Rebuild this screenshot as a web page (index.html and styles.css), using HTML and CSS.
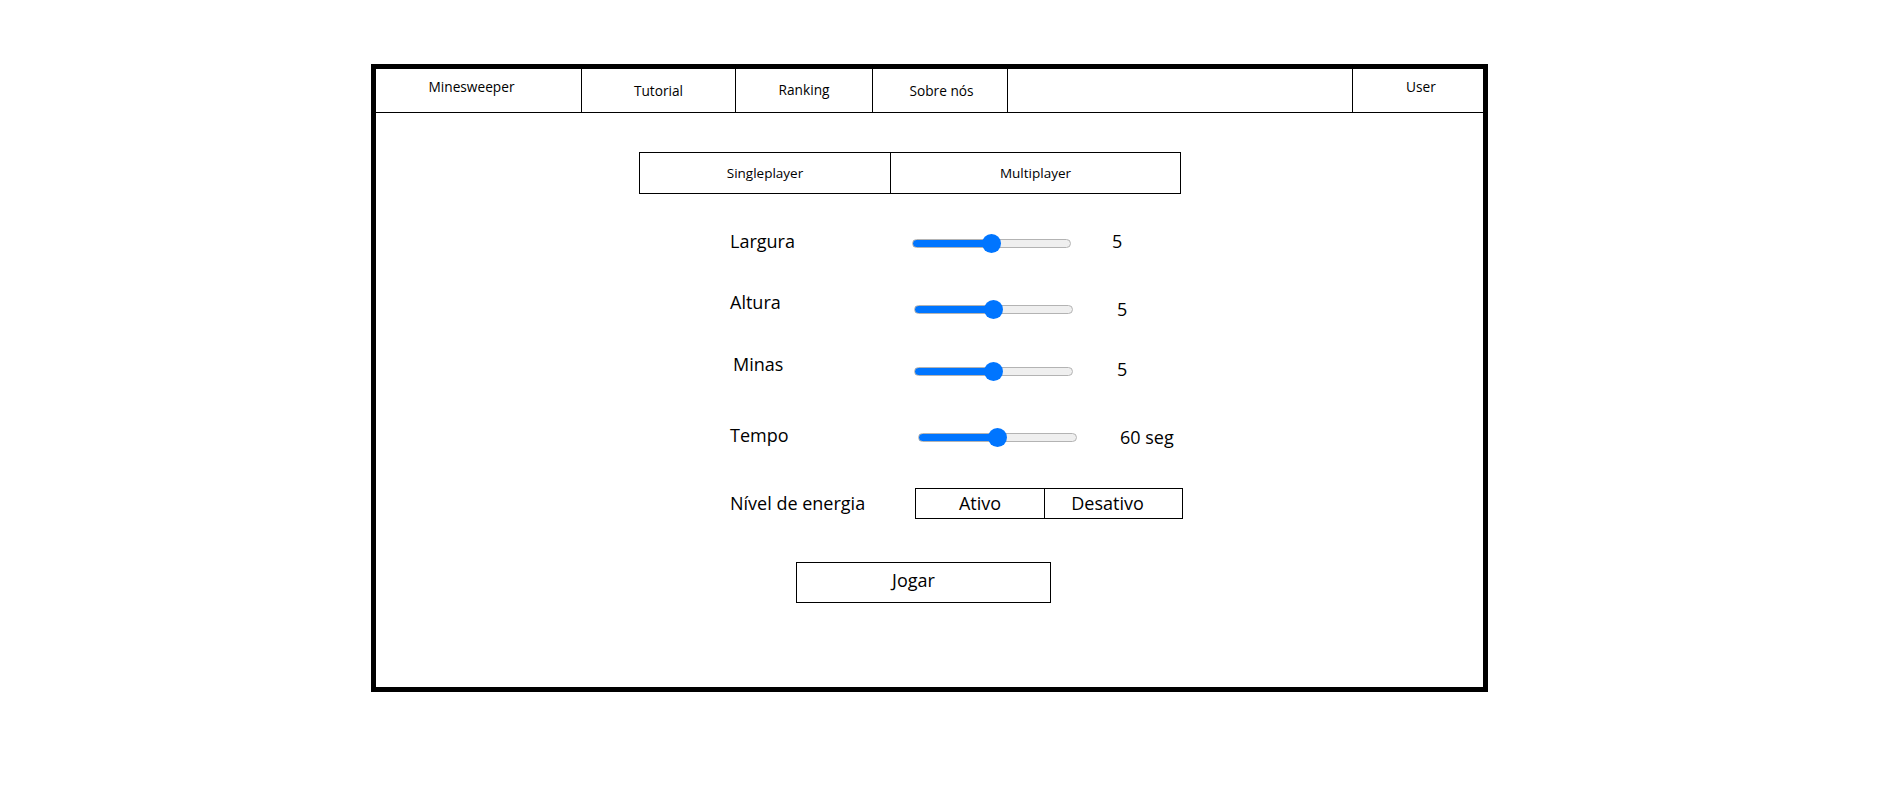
FILE: index.html
```html
<!DOCTYPE html>
<html lang="pt">
<head>
<meta charset="utf-8">
<title>Minesweeper</title>
<link rel="stylesheet" href="styles.css">
</head>
<body>
<div class="page">
  <div class="frame">
    <nav class="nav">
      <a class="nav-item nav-brand raised">Minesweeper</a>
      <a class="nav-item nav-tutorial raised-xs">Tutorial</a>
      <a class="nav-item nav-ranking raised-sm">Ranking</a>
      <a class="nav-item nav-about raised-xs">Sobre nós</a>
      <div class="nav-item nav-spacer"></div>
      <a class="nav-item nav-user raised">User</a>
    </nav>
    <main class="content">
      <div class="mode-toggle">
        <button class="mode mode-single" type="button">Singleplayer</button>
        <button class="mode mode-multi" type="button">Multiplayer</button>
      </div>
      <form class="settings">
        <div class="row">
          <label class="label lift-sm" for="largura">Largura</label>
          <input class="slider slider-left" id="largura" type="range" min="0" max="10" value="5" style="--fill: 50%">
          <span class="value value-near lift-sm">5</span>
        </div>
        <div class="row row-gap-l">
          <label class="label lift-lg" for="altura">Altura</label>
          <input class="slider" id="altura" type="range" min="0" max="10" value="5" style="--fill: 50%">
          <span class="value">5</span>
        </div>
        <div class="row row-gap-s">
          <label class="label lift-lg indent" for="minas">Minas</label>
          <input class="slider" id="minas" type="range" min="0" max="10" value="5" style="--fill: 50%">
          <span class="value lift-sm">5</span>
        </div>
        <div class="row row-gap-m">
          <label class="label lift-sm" for="tempo">Tempo</label>
          <input class="slider slider-right" id="tempo" type="range" min="0" max="120" value="60" style="--fill: 50%">
          <span class="value value-far">60 seg</span>
        </div>
        <div class="row row-gap-l">
          <span class="label">Nível de energia</span>
          <div class="energy">
            <button class="energy-opt energy-on" type="button">Ativo</button>
            <button class="energy-opt energy-off" type="button">Desativo</button>
          </div>
        </div>
        <button class="play" type="button">Jogar</button>
      </form>
    </main>
  </div>
</div>
</body>
</html>
```

FILE: styles.css
```css
* {
  box-sizing: border-box;
}

html, body {
  margin: 0;
  padding: 0;
  background: #ffffff;
}

body {
  font-family: "Open Sans", "Noto Sans", sans-serif;
  color: #000000;
}

.page {
  padding-top: 64px;
  padding-left: 371px;
}

.frame {
  width: 1117px;
  height: 628px;
  border: 5px solid #000000;
  display: flex;
  flex-direction: column;
}

/* Navigation */
.nav {
  display: flex;
  height: 44px;
  border-bottom: 1px solid #000000;
  flex-shrink: 0;
}

.nav-item {
  display: flex;
  align-items: center;
  justify-content: center;
  font-size: 13.7px;
  color: #000000;
  border-right: 1px solid #000000;
  text-decoration: none;
}

.nav-brand { width: 206px; padding-right: 14px; }
.nav-tutorial { width: 154px; }
.nav-ranking { width: 137px; }
.nav-about { width: 135px; padding-left: 3px; }
.nav-spacer { flex: 1; }
.nav-user { width: 130px; border-right: none; padding-left: 6px; }

.raised { padding-bottom: 8px; }
.raised-sm { padding-bottom: 3px; }
.raised-xs { padding-bottom: 1px; }

/* Content */
.content {
  display: flex;
  flex-direction: column;
  align-items: flex-start;
  padding-top: 39px;
}

.mode-toggle {
  margin-left: 263px;
  width: 542px;
  height: 42px;
  border: 1px solid #000000;
  display: grid;
  grid-template-columns: 251px 1fr;
}

.mode {
  font: inherit;
  font-size: 13.5px;
  background: none;
  border: none;
  padding: 0;
  color: #000000;
}

.mode-single {
  border-right: 1px solid #000000;
}

.settings {
  margin-left: 354px;
  margin-top: 29px;
  display: flex;
  flex-direction: column;
}

.row {
  display: flex;
  align-items: center;
  height: 40px;
}

.row-gap-s { margin-top: 22px; }
.row-gap-m { margin-top: 26px; }
.row-gap-l { margin-top: 26px; }

.label {
  width: 184px;
  font-size: 18px;
}

.indent { padding-left: 3px; }

.lift-sm { margin-bottom: 4px; }
.lift-lg { margin-bottom: 15px; }

.value {
  margin-left: 44px;
  font-size: 18px;
}

.value-near { margin-left: 41px; }
.value-far { margin-left: 43px; }

/* Range slider */
.slider {
  -webkit-appearance: none;
  appearance: none;
  width: 159px;
  height: 9px;
  margin: 0;
  padding: 0;
  background: transparent;
}

.slider-left { margin-left: -2px; }
.slider-right { margin-left: 4px; }

.slider::-webkit-slider-runnable-track {
  height: 9px;
  border-radius: 5px;
  border: 1px solid #b3b3b3;
  background: linear-gradient(to right, #0075ff var(--fill), #efefef var(--fill));
}

.slider::-webkit-slider-thumb {
  -webkit-appearance: none;
  appearance: none;
  width: 19px;
  height: 19px;
  border-radius: 50%;
  background: #0075ff;
  border: none;
  margin-top: -6px;
}

/* Energy toggle */
.energy {
  margin-left: 1px;
  display: grid;
  grid-template-columns: 129px 137px;
  height: 31px;
  border: 1px solid #000000;
}

.energy-opt {
  font: inherit;
  font-size: 18px;
  background: none;
  border: none;
  padding: 0;
  color: #000000;
}

.energy-on {
  border-right: 1px solid #000000;
}

.energy-off {
  padding-right: 12px;
}

/* Play */
.play {
  margin-left: 66px;
  margin-top: 39px;
  width: 255px;
  height: 41px;
  font: inherit;
  font-size: 18px;
  background: none;
  border: 1px solid #000000;
  color: #000000;
  padding: 0 20px 6px 0;
}
```
